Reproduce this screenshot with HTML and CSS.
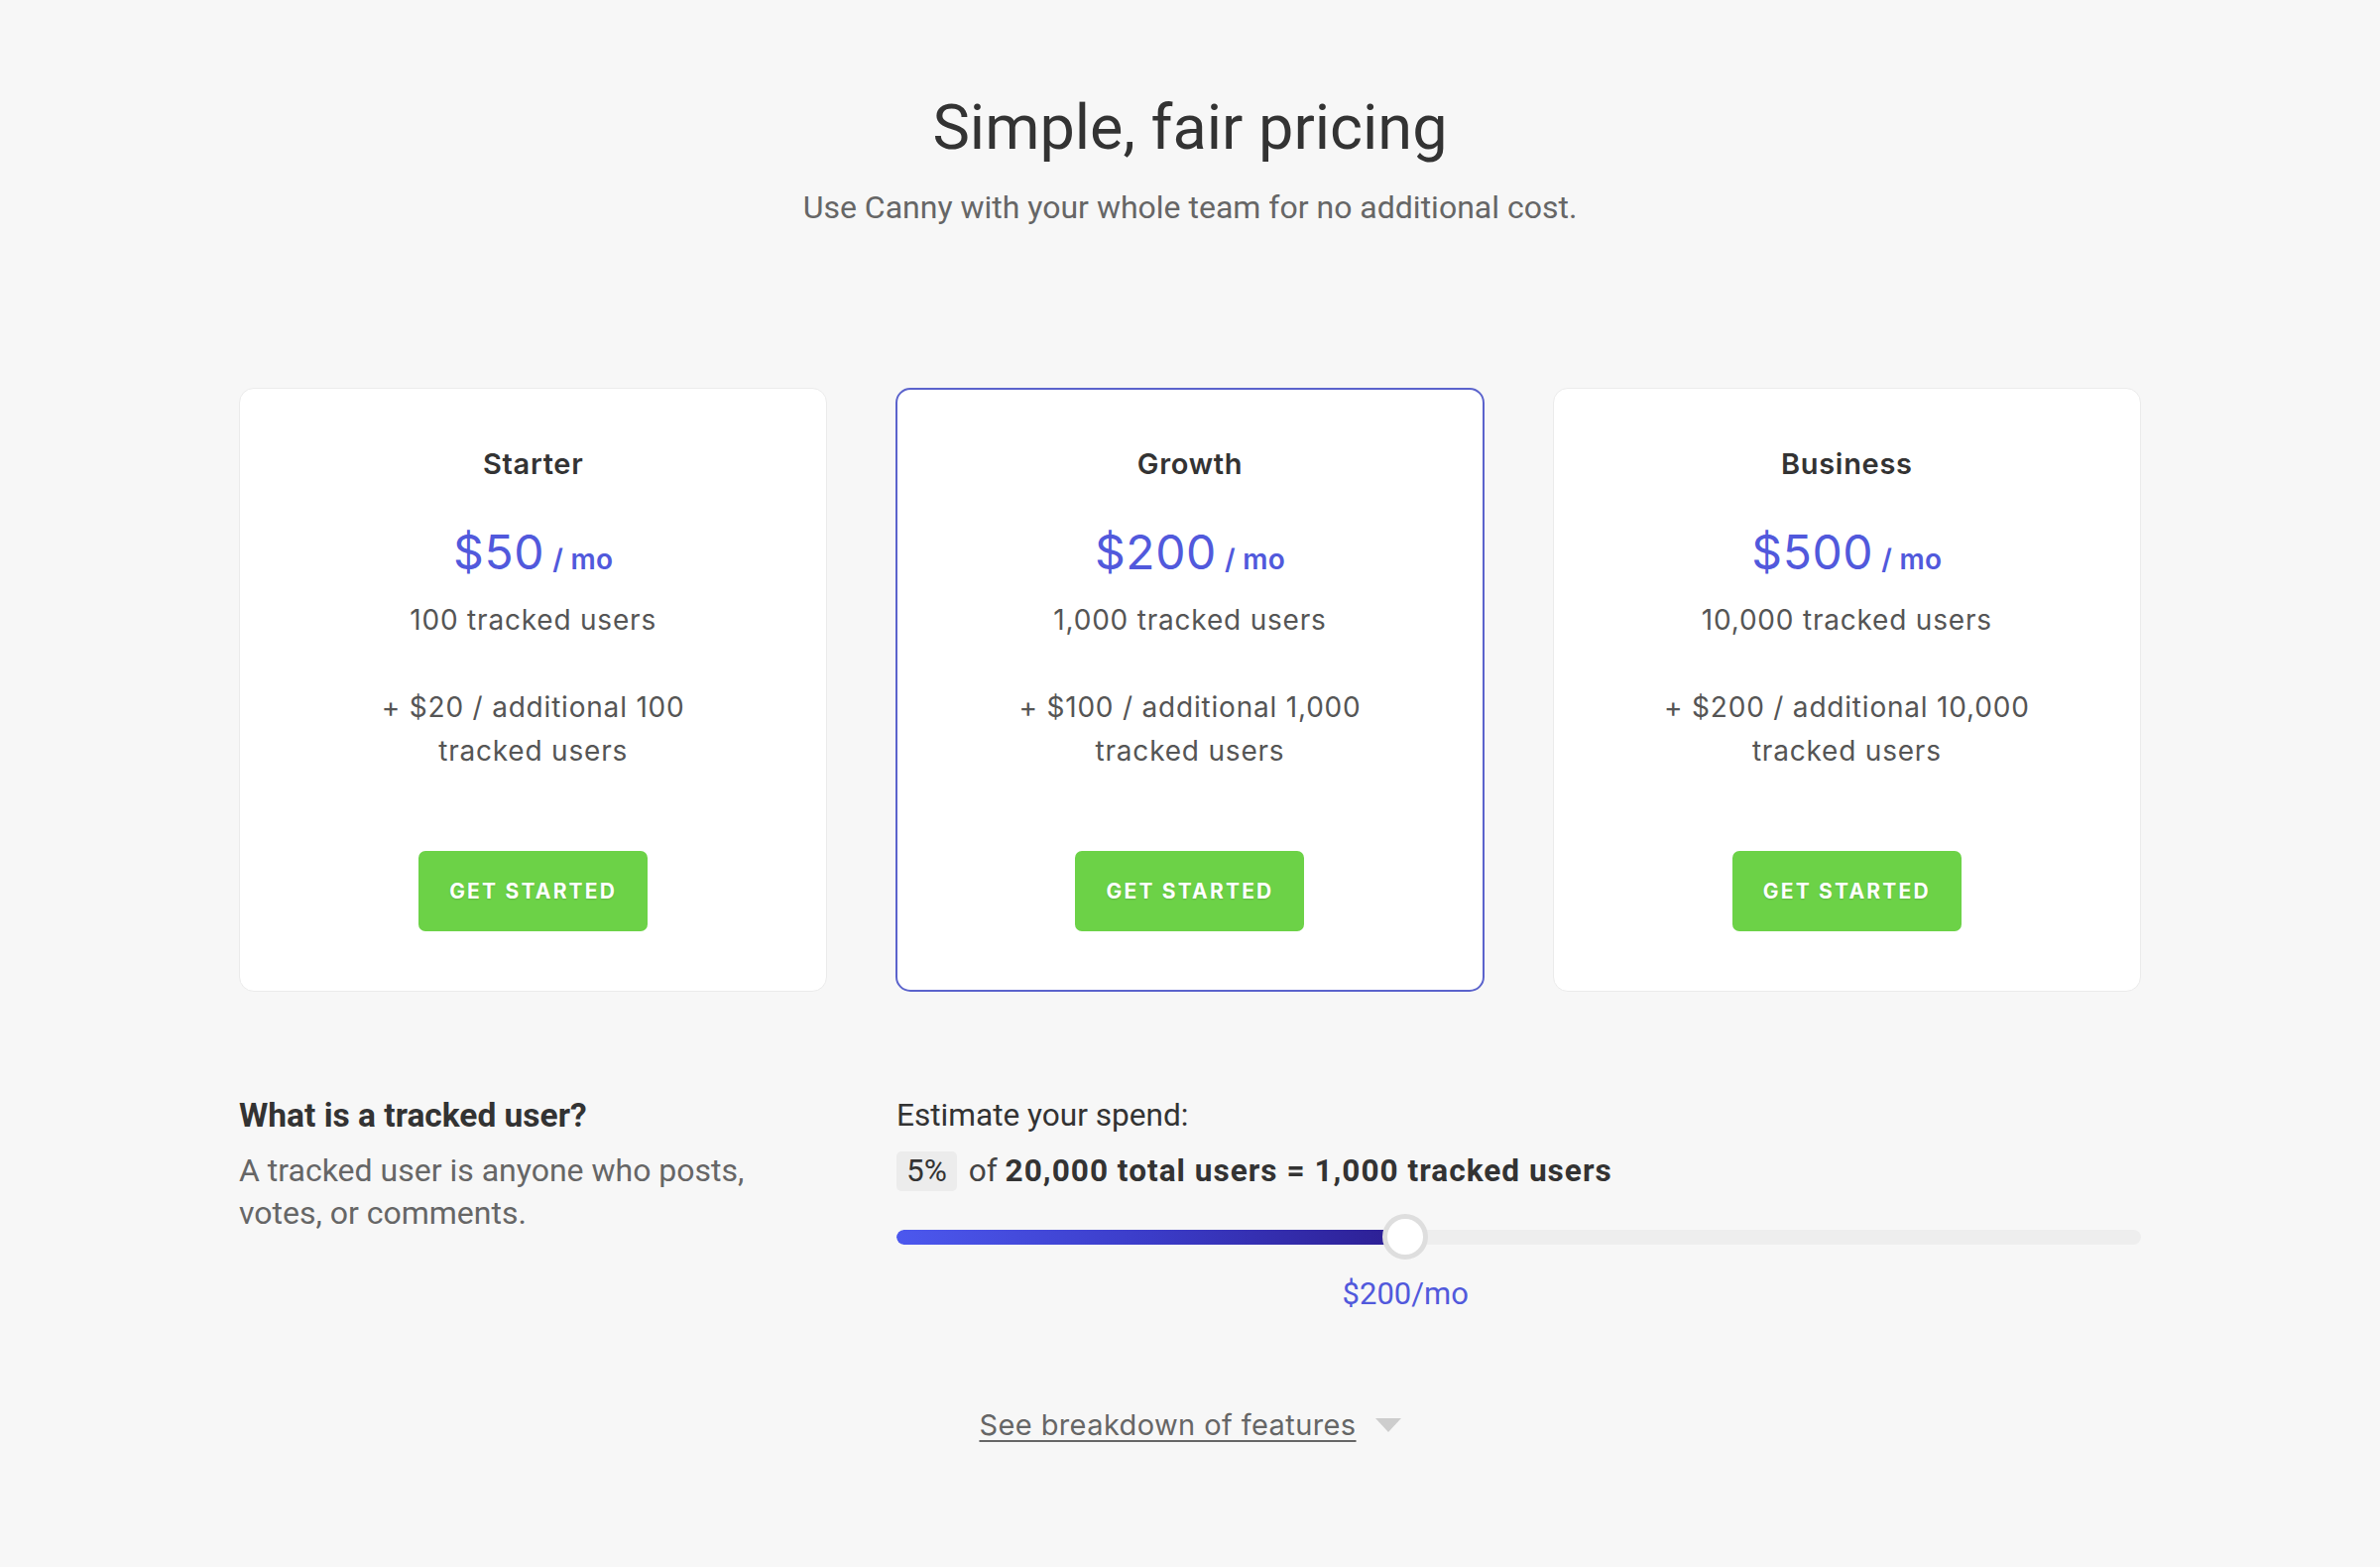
FILE: index.html
```html
<!DOCTYPE html>
<html lang="en">
<head>
<meta charset="utf-8">
<title>Simple, fair pricing</title>
<link rel="stylesheet" href="styles.css">
</head>
<body>
<main class="page">
  <header class="intro">
    <h1 class="title">Simple, fair pricing</h1>
    <p class="subtitle">Use Canny with your whole team for no additional cost.</p>
  </header>

  <section class="plans">
    <div class="plan">
      <div class="plan-name">Starter</div>
      <div class="plan-price">$50<span class="per">/ mo</span></div>
      <div class="plan-users">100 tracked users</div>
      <div class="plan-extra">+ $20 / additional 100<br>tracked users</div>
      <a class="btn" href="#">Get started</a>
    </div>
    <div class="plan plan-featured">
      <div class="plan-name">Growth</div>
      <div class="plan-price">$200<span class="per">/ mo</span></div>
      <div class="plan-users">1,000 tracked users</div>
      <div class="plan-extra">+ $100 / additional 1,000<br>tracked users</div>
      <a class="btn" href="#">Get started</a>
    </div>
    <div class="plan">
      <div class="plan-name">Business</div>
      <div class="plan-price">$500<span class="per">/ mo</span></div>
      <div class="plan-users">10,000 tracked users</div>
      <div class="plan-extra">+ $200 / additional 10,000<br>tracked users</div>
      <a class="btn" href="#">Get started</a>
    </div>
  </section>

  <section class="details">
    <div class="explain">
      <div class="explain-title">What is a tracked user?</div>
      <p class="explain-text">A tracked user is anyone who posts,<br>votes, or comments.</p>
    </div>
    <div class="estimate">
      <div class="estimate-label">Estimate your spend:</div>
      <div class="estimate-line"><span class="pct">5%</span> <span class="of">of</span> <strong>20,000 total users = 1,000 tracked users</strong></div>
      <div class="slider">
        <div class="track">
          <div class="fill" style="width: 40.9%"></div>
        </div>
        <div class="thumb" style="left: 40.9%"></div>
      </div>
      <div class="spend-row">
        <span class="spend" style="left: 40.9%">$200/mo</span>
      </div>
    </div>
  </section>

  <div class="breakdown">
    <a class="breakdown-link" href="#">See breakdown of features</a>
    <span class="caret"></span>
  </div>
</main>
</body>
</html>
```

FILE: styles.css
```css
* { box-sizing: border-box; }

html, body {
  margin: 0;
  padding: 0;
  background: #f7f7f7;
}

body {
  font-family: Roboto, "Liberation Sans", Arial, sans-serif;
  color: #333;
}

.page {
  width: 1918px;
  margin: 0 auto;
  padding: 91px 0 120px;
}

/* header */
.intro { text-align: center; }

.title {
  margin: 0;
  font-size: 63px;
  line-height: 76px;
  font-weight: 400;
  color: #333;
}

.subtitle {
  margin: 20px 0 0;
  font-size: 32px;
  line-height: 45px;
  color: #666;
}

/* plans */
.plans {
  display: grid;
  grid-template-columns: repeat(3, 1fr);
  column-gap: 69px;
  margin-top: 159px;
}

.plan {
  background: #fff;
  border: 1px solid #ebebeb;
  border-radius: 15px;
  padding: 59px 0 60px;
  text-align: center;
  font-family: Inter, "Open Sans", sans-serif;
  display: flex;
  flex-direction: column;
  align-items: center;
}

.plan-featured {
  border: 2px solid #5b63cc;
  padding: 58px 0 59px;
}

.plan-name {
  font-size: 29px;
  line-height: 34px;
  font-weight: 600;
  color: #333;
  letter-spacing: 0.7px;
}

.plan-price {
  margin-top: 43px;
  font-size: 48px;
  line-height: 58px;
  color: #5159dc;
  letter-spacing: 0.6px;
}

.per {
  margin-left: 8px;
  font-size: 28px;
  font-weight: 600;
  letter-spacing: 0.3px;
}

.plan-users {
  margin-top: 12px;
  font-size: 28px;
  line-height: 40px;
  color: #555;
  letter-spacing: 0.8px;
}

.plan-extra {
  margin-top: 46px;
  font-size: 28px;
  line-height: 44px;
  color: #555;
  letter-spacing: 0.8px;
}

.btn {
  margin-top: 79px;
  width: 231px;
  height: 81px;
  display: flex;
  align-items: center;
  justify-content: center;
  background: #6cd247;
  border-radius: 7px;
  color: #fff;
  text-decoration: none;
  text-transform: uppercase;
  font-size: 21px;
  font-weight: 700;
  letter-spacing: 2.2px;
  text-shadow: 0 1px 2px rgba(0, 0, 0, 0.12);
}

/* details */
.details {
  display: grid;
  grid-template-columns: 594px 1fr;
  column-gap: 69px;
  margin-top: 103px;
}

.explain-title {
  font-size: 33.5px;
  line-height: 44px;
  font-weight: 700;
  color: #333;
}

.explain-text {
  margin: 12px 0 0;
  font-size: 32px;
  line-height: 43px;
  color: #666;
}

.estimate-label {
  font-size: 31.6px;
  line-height: 44px;
  color: #333;
}

.estimate-line {
  margin-top: 12px;
  font-size: 31.6px;
  line-height: 44px;
  color: #444;
}

.pct {
  display: inline-block;
  background: #ececec;
  border-radius: 5px;
  padding: 0 10px;
  line-height: 40px;
  color: #333;
}

.of { margin-left: 4px; }

.estimate-line strong {
  font-weight: 700;
  color: #333;
  letter-spacing: 1px;
}

.slider {
  position: relative;
  margin-top: 21px;
  height: 46px;
  display: flex;
  align-items: center;
}

.track {
  width: 100%;
  height: 15px;
  border-radius: 8px;
  background: #eeeeee;
  overflow: hidden;
}

.fill {
  height: 100%;
  border-radius: 8px 0 0 8px;
  background: linear-gradient(90deg, #4c58ee 0%, #3b3cc8 50%, #2c1e92 100%);
}

.thumb {
  position: absolute;
  top: 0;
  width: 46px;
  height: 46px;
  margin-left: -23px;
  border-radius: 50%;
  background: #fff;
  border: 5px solid #dedede;
}

.spend-row {
  position: relative;
  margin-top: 15px;
  height: 40px;
}

.spend {
  position: absolute;
  top: 0;
  transform: translateX(-50%);
  font-size: 31px;
  line-height: 40px;
  color: #5159dc;
  white-space: nowrap;
}

/* breakdown */
.breakdown {
  margin-top: 92px;
  display: flex;
  justify-content: center;
  align-items: center;
  font-family: Inter, "Open Sans", sans-serif;
}

.breakdown-link {
  font-size: 29px;
  line-height: 40px;
  color: #666;
  letter-spacing: 0.4px;
  text-decoration: underline;
  text-decoration-thickness: 2px;
  text-underline-offset: 5px;
}

.caret {
  margin-left: 19px;
  width: 0;
  height: 0;
  border-left: 13px solid transparent;
  border-right: 13px solid transparent;
  border-top: 14px solid #cdcdcd;
}
```
